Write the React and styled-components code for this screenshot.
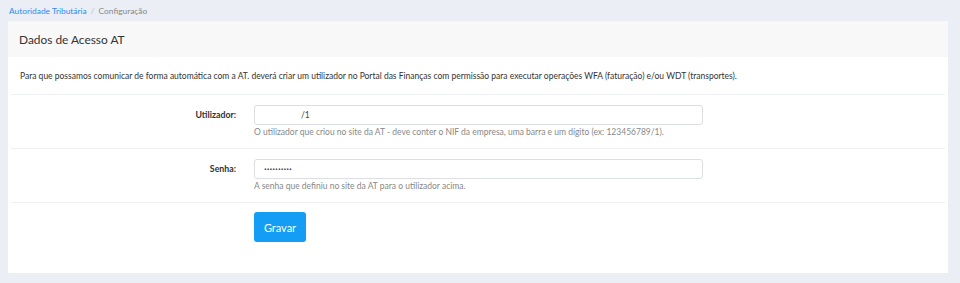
import React from "react";
import styled, { createGlobalStyle } from "styled-components";

const GlobalStyle = createGlobalStyle`
  html, body {
    margin: 0;
    padding: 0;
    background: #ebeef5;
    font-family: Lato, "Open Sans", sans-serif;
    color: #333;
  }
  * { box-sizing: border-box; }
`;

export default function App() {
  return (
    <>
      <GlobalStyle />
      <Page>
        <Breadcrumb>
          <Crumb href="#">Autoridade Tributária</Crumb>
          <Sep>/</Sep>
          <Current>Configuração</Current>
        </Breadcrumb>
        <Card>
          <CardHeader>Dados de Acesso AT</CardHeader>
          <Intro>
            Para que possamos comunicar de forma automática com a AT. deverá
            criar um utilizador no Portal das Finanças com permissão para
            executar operações WFA (faturação) e/ou WDT (transportes).
          </Intro>
          <FormRow>
            <Label>Utilizador:</Label>
            <Field>
              <Input type="text" defaultValue={" ".repeat(17) + "/1"} />
              <Help>
                O utilizador que criou no site da AT - deve conter o NIF da
                empresa, uma barra e um dígito (ex: 123456789/1).
              </Help>
            </Field>
          </FormRow>
          <FormRow>
            <Label>Senha:</Label>
            <Field>
              <Input type="password" $secret defaultValue="1234567890" />
              <Help>A senha que definiu no site da AT para o utilizador acima.</Help>
            </Field>
          </FormRow>
          <Actions>
            <Button>Gravar</Button>
          </Actions>
        </Card>
      </Page>
    </>
  );
}

const Page = styled.div`
  padding: 0 12px 10px 8px;
  height: 283px;
`;

const Breadcrumb = styled.div`
  display: flex;
  align-items: center;
  height: 21px;
  font-size: 8.4px;
  padding-left: 1px;
`;

const Crumb = styled.a`
  color: #2d8cf0;
  text-decoration: none;
`;

const Sep = styled.span`
  color: #b8bcc4;
  margin: 0 4px;
`;

const Current = styled.span`
  color: #888;
`;

const Card = styled.div`
  background: #fff;
  height: 252px;
  display: flex;
  flex-direction: column;
`;

const CardHeader = styled.div`
  background: #f8f8f8;
  height: 36px;
  display: flex;
  align-items: center;
  padding-left: 11px;
  font-size: 11.9px;
  color: #333;
`;

const Intro = styled.p`
  margin: 0 3px;
  padding: 1px 9px 0;
  height: 38px;
  display: flex;
  align-items: center;
  font-size: 8.5px;
  border-bottom: 1px solid #eef0f3;
`;

const FormRow = styled.div`
  display: flex;
  margin: 0 3px;
  height: 54px;
  padding-top: 10px;
  border-bottom: 1px solid #eef0f3;
`;

const Label = styled.label`
  width: 243px;
  padding-right: 18px;
  text-align: right;
  font-size: 8.8px;
  font-weight: 700;
  line-height: 20px;
  color: #333;
`;

const Field = styled.div`
  display: flex;
  flex-direction: column;
`;

const Input = styled.input`
  width: 449px;
  height: 20px;
  border: 1px solid #dcdee2;
  border-radius: 3px;
  padding: 0 9px;
  font-family: ${(p) => (p.$secret ? '"Open Sans", sans-serif' : "inherit")};
  font-size: ${(p) => (p.$secret ? "7.4px" : "8.5px")};
  color: #444;
  outline: none;
`;

const Help = styled.span`
  margin-top: 2px;
  font-size: 8.5px;
  color: #888;
`;

const Actions = styled.div`
  padding: 9px 0 0 246px;
`;

const Button = styled.button`
  width: 52px;
  height: 30px;
  border: none;
  border-radius: 3px;
  background: #149df5;
  color: #fff;
  font-family: inherit;
  font-size: 11px;
`;
